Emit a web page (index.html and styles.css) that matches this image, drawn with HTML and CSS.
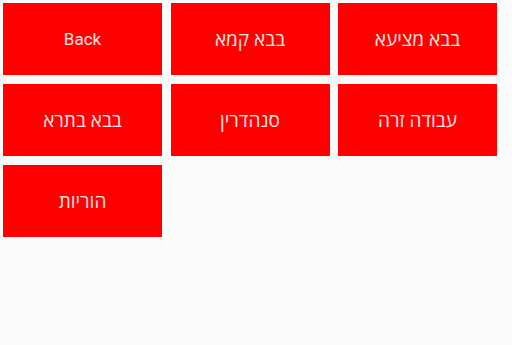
FILE: index.html
```html
<!DOCTYPE html>
<html lang="he">
<head>
<meta charset="utf-8">
<link rel="stylesheet" href="styles.css">
</head>
<body>
<div class="grid">
  <div class="btn btn-latin">Back</div>
  <div class="btn">בבא קמא</div>
  <div class="btn">בבא מציעא</div>
  <div class="btn">בבא בתרא</div>
  <div class="btn">סנהדרין</div>
  <div class="btn">עבודה זרה</div>
  <div class="btn">הוריות</div>
</div>
</body>
</html>
```
FILE: styles.css
```css
html, body {
  margin: 0;
  padding: 0;
  background: #fafafa;
  width: 512px;
  height: 345px;
  overflow: hidden;
}
.grid {
  display: grid;
  grid-template-columns: 159px 159px 159px;
  grid-auto-rows: 72px;
  column-gap: 8.5px;
  row-gap: 9px;
  padding: 3px 0 0 3px;
}
.btn {
  background: #ff0000;
  color: #ffe2e2;
  font-family: "Open Sans", "Noto Sans", sans-serif;
  font-size: 19px;
  display: flex;
  align-items: center;
  justify-content: center;
}
.btn-latin {
  font-family: Roboto, sans-serif;
  font-size: 17px;
}
```
